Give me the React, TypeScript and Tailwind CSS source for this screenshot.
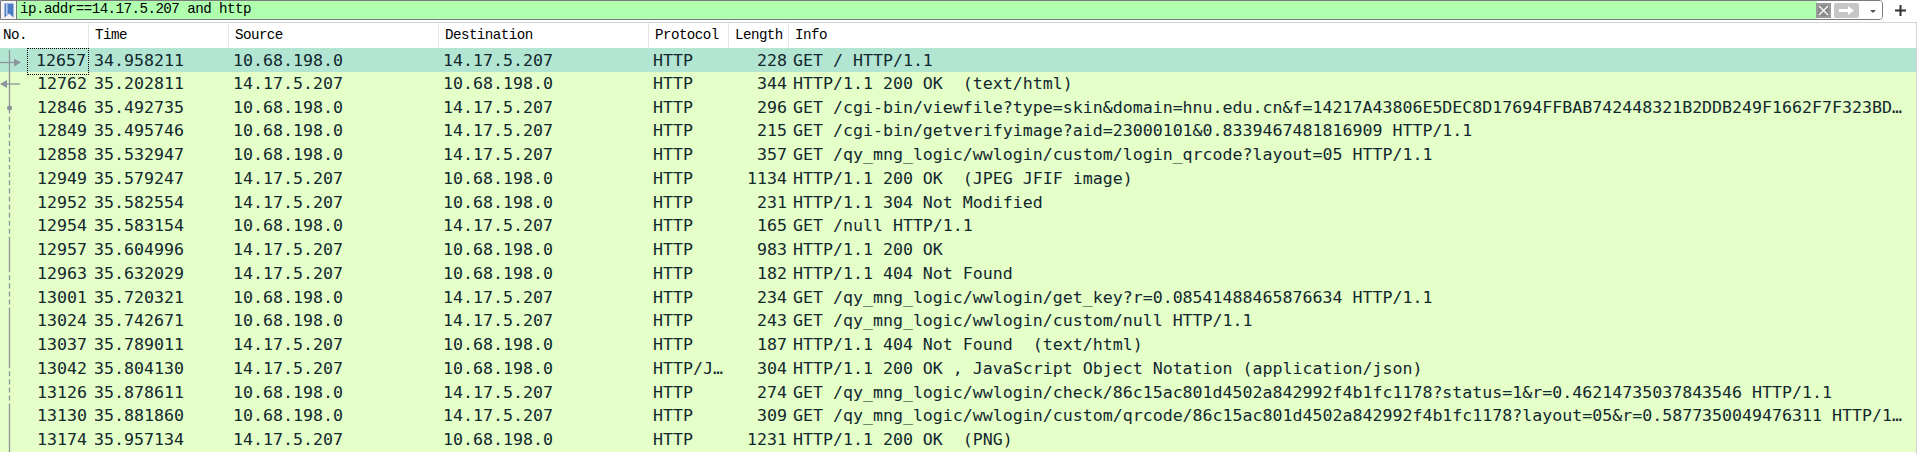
const cols = "grid grid-cols-[89px_140px_210px_210px_80px_60px_1fr]";

const packets = [
  ["12657", "34.958211", "10.68.198.0", "14.17.5.207", "HTTP", "228", "GET / HTTP/1.1"],
  ["12762", "35.202811", "14.17.5.207", "10.68.198.0", "HTTP", "344", "HTTP/1.1 200 OK  (text/html)"],
  ["12846", "35.492735", "10.68.198.0", "14.17.5.207", "HTTP", "296", "GET /cgi-bin/viewfile?type=skin&domain=hnu.edu.cn&f=14217A43806E5DEC8D17694FFBAB742448321B2DDB249F1662F7F323BD…"],
  ["12849", "35.495746", "10.68.198.0", "14.17.5.207", "HTTP", "215", "GET /cgi-bin/getverifyimage?aid=23000101&0.8339467481816909 HTTP/1.1"],
  ["12858", "35.532947", "10.68.198.0", "14.17.5.207", "HTTP", "357", "GET /qy_mng_logic/wwlogin/custom/login_qrcode?layout=05 HTTP/1.1"],
  ["12949", "35.579247", "14.17.5.207", "10.68.198.0", "HTTP", "1134", "HTTP/1.1 200 OK  (JPEG JFIF image)"],
  ["12952", "35.582554", "14.17.5.207", "10.68.198.0", "HTTP", "231", "HTTP/1.1 304 Not Modified"],
  ["12954", "35.583154", "10.68.198.0", "14.17.5.207", "HTTP", "165", "GET /null HTTP/1.1"],
  ["12957", "35.604996", "14.17.5.207", "10.68.198.0", "HTTP", "983", "HTTP/1.1 200 OK"],
  ["12963", "35.632029", "14.17.5.207", "10.68.198.0", "HTTP", "182", "HTTP/1.1 404 Not Found"],
  ["13001", "35.720321", "10.68.198.0", "14.17.5.207", "HTTP", "234", "GET /qy_mng_logic/wwlogin/get_key?r=0.08541488465876634 HTTP/1.1"],
  ["13024", "35.742671", "10.68.198.0", "14.17.5.207", "HTTP", "243", "GET /qy_mng_logic/wwlogin/custom/null HTTP/1.1"],
  ["13037", "35.789011", "14.17.5.207", "10.68.198.0", "HTTP", "187", "HTTP/1.1 404 Not Found  (text/html)"],
  ["13042", "35.804130", "14.17.5.207", "10.68.198.0", "HTTP/J…", "304", "HTTP/1.1 200 OK , JavaScript Object Notation (application/json)"],
  ["13126", "35.878611", "10.68.198.0", "14.17.5.207", "HTTP", "274", "GET /qy_mng_logic/wwlogin/check/86c15ac801d4502a842992f4b1fc1178?status=1&r=0.46214735037843546 HTTP/1.1"],
  ["13130", "35.881860", "10.68.198.0", "14.17.5.207", "HTTP", "309", "GET /qy_mng_logic/wwlogin/custom/qrcode/86c15ac801d4502a842992f4b1fc1178?layout=05&r=0.5877350049476311 HTTP/1…"],
  ["13174", "35.957134", "14.17.5.207", "10.68.198.0", "HTTP", "1231", "HTTP/1.1 200 OK  (PNG)"],
];

const ROW_H = 23.75;

// related-packet line, in list coordinates (y from top of first row)
const segments: [number, number, boolean][] = [
  [0, 60, false],
  [60, 192, true],
  [192, 219, false],
  [219, 264, true],
  [264, 315, false],
  [315, 360, true],
  [360, 420, false],
];

const Related = ({ index }: { index: number }) => {
  const top = index * ROW_H;
  const c = "#8d949b";
  return (
    <svg width="27" height={ROW_H} className="shrink-0 overflow-hidden">
      {segments.map(([a, b, dashed], i) => (
        <line
          key={i}
          x1="9.5"
          x2="9.5"
          y1={a - top}
          y2={b - top}
          stroke={c}
          strokeWidth="1.3"
          strokeDasharray={dashed ? "5 3" : undefined}
        />
      ))}
      {index === 0 && (
        <>
          <line x1="0" x2="15" y1="12.5" y2="12.5" stroke={c} strokeWidth="1.3" />
          <path d="M14 8.5 L21 12.5 L14 16.5 Z" fill={c} />
        </>
      )}
      {index === 1 && (
        <>
          <line x1="6" x2="20" y1="12" y2="12" stroke={c} strokeWidth="1.3" />
          <path d="M7 8 L0 12 L7 16 Z" fill={c} />
        </>
      )}
      {index === 2 && <circle cx="9.5" cy="12" r="2.5" fill={c} />}
    </svg>
  );
};

const FilterBar = () => (
  <div className="flex h-[22px] shrink-0 items-start bg-white">
    <div className="flex h-[20px] flex-1 overflow-hidden rounded-r-[4px] border border-[#7a7a7a]">
      <div className="flex w-[16px] shrink-0 items-center justify-center border-r border-[#7a7a7a] bg-[#f4f4f4]">
        <svg width="10" height="15" viewBox="0 0 10 15">
          <path d="M0.5 0.5 H9.5 V14.5 L5 10.5 L0.5 14.5 Z" fill="#4a7cc6" />
          <rect x="2" y="1" width="1.6" height="11" fill="#b9cff0" />
        </svg>
      </div>
      <div className="flex flex-1 items-center bg-[#afffaf] pl-[3px] font-['Liberation_Mono',monospace] text-[14.2px] tracking-[-0.55px] text-black whitespace-pre">
        ip.addr==14.17.5.207 and http
      </div>
      <div className="flex shrink-0 items-center gap-[3px] bg-white pr-[4px]">
        <svg width="15" height="15" viewBox="0 0 15 15" className="-ml-px">
          <rect x="0" y="0" width="15" height="15" fill="#8b8b8b" />
          <rect x="1" y="1" width="13" height="13" fill="none" stroke="#a9a9a9" strokeWidth="1" />
          <path d="M3 3 L12 12 M12 3 L3 12" stroke="#fff" strokeWidth="1.3" />
        </svg>
        <svg width="25" height="15" viewBox="0 0 25 15">
          <rect x="0" y="0" width="25" height="15" rx="2" fill="#c6c6c6" />
          <path d="M5 6 H14 V3 L20 7.5 L14 12 V9 H5 Z" fill="#fff" />
        </svg>
        <svg width="16" height="15" viewBox="0 0 16 15">
          <path d="M8 7 L14 7 L11 10 Z" fill="#555" />
        </svg>
      </div>
    </div>
    <div className="flex h-[20px] w-[34px] shrink-0 items-center justify-center">
      <svg width="11" height="11" viewBox="0 0 11 11">
        <rect x="4.5" y="0" width="2" height="11" fill="#303030" />
        <rect x="0" y="4.5" width="11" height="2" fill="#303030" />
      </svg>
    </div>
  </div>
);

const headers = ["No.", "Time", "Source", "Destination", "Protocol", "Length", "Info"];

export default function App() {
  return (
    <div className="flex h-[454px] w-[1917px] flex-col overflow-hidden bg-white">
      <FilterBar />
      <div className="flex-1 overflow-hidden border-t border-r border-[#d4d4d4]">
        <div className={`${cols} h-[25px] bg-white font-['Liberation_Mono',monospace] text-[14.2px] tracking-[-0.55px] text-black`}>
          {headers.map((h, i) => (
            <div
              key={h}
              className={`flex items-center whitespace-pre ${i === 0 ? "pl-[3px]" : "pl-[6px]"} ${i < 6 ? "border-r border-[#e5e5e5]" : ""}`}
            >
              {h}
            </div>
          ))}
        </div>
        <div className="font-['DejaVu_Sans_Mono',monospace] text-[16.6px] text-[#12272e]">
          {packets.map((p, i) => (
            <div
              key={p[0]}
              className={`${cols} h-[23.75px] items-center whitespace-pre ${i === 0 ? "bg-[#b3e6d2]" : "bg-[#e4ffc7]"}`}
            >
              <div className="flex h-full items-center">
                <Related index={i} />
                <div
                  className={`flex h-full flex-1 items-center justify-end pr-[2px] ${i === 0 ? "border border-dotted border-black" : ""}`}
                >
                  {p[0]}
                </div>
              </div>
              <div className="pl-[5px]">{p[1]}</div>
              <div className="pl-[4px]">{p[2]}</div>
              <div className="pl-[4px]">{p[3]}</div>
              <div className="pl-[4px]">{p[4]}</div>
              <div className="pr-[2px] text-right">{p[5]}</div>
              <div className="overflow-hidden pl-[4px]">{p[6]}</div>
            </div>
          ))}
        </div>
      </div>
    </div>
  );
}
